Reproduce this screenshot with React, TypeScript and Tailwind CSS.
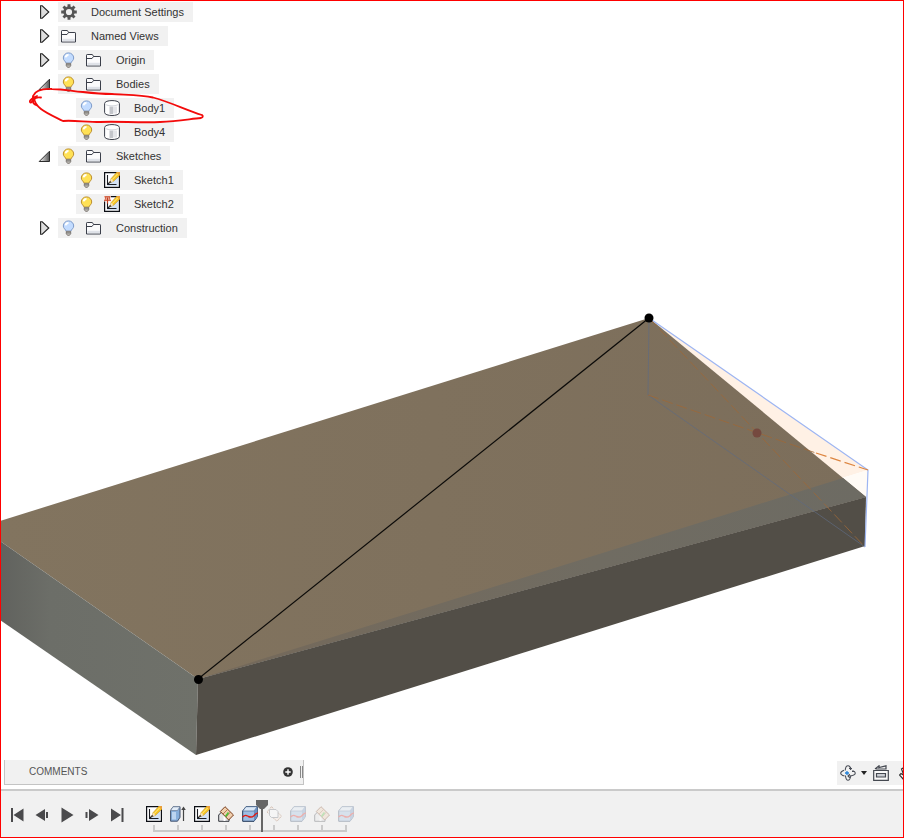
import React, { useState } from "react";

const ink = "#3b3f4a";

function Bulb({ on }: { on?: boolean }) {
  return (
    <svg viewBox="0 0 16 16" className="size-4">
      <path
        d="M7.5.9a5.100 5.100 0 0 0-5.200 5.100c0 2.500 2.400 3.300 2.900 5.300h4.600c.5-2 2.900-2.800 2.900-5.300A5.100 5.100 0 0 0 7.500.9Z"
        fill={on ? "#ffe155" : "#c3dcff"}
        stroke={on ? "#bd902f" : "#7f9cca"}
      />
      <path d="M4.600 5.400A2.800 2.800 0 0 1 7.500 3" fill="none" stroke="#fff" strokeWidth="1.800" />
      <path d="M5.300 11.300h4.400v2.400l-1.200 1.600h-2l-1.200-1.600Z" fill="#c4c1bc" stroke="#77726c" strokeWidth=".9" />
      <path d="M5.500 12.900h4" stroke="#5a5753" strokeWidth=".8" />
    </svg>
  );
}

function Folder() {
  return (
    <svg viewBox="0 0 16 16" className="size-4">
      <path d="M.5 14V3.200q0-.7.7-.7H6q.6 0 .8.6l.7 1.400h6.400q.6 0 .6.6V14Z" fill="#fbfbfc" stroke={ink} />
      <path d="M1 6.500h5l1.500-2" fill="none" stroke={ink} />
      <path d="M1.500 12h12.500" stroke="#dfe2e8" strokeWidth="2.400" />
    </svg>
  );
}

function Gear() {
  return (
    <svg viewBox="-8 -8 16 16" className="size-4" fill="none" stroke="#555">
      <circle r="4.400" strokeWidth="2.600" />
      {[0, 45, 90, 135].map((a) => (
        <path key={a} d="M0-7.800V-5M0 5v2.800" strokeWidth="2.900" transform={`rotate(${a})`} />
      ))}
    </svg>
  );
}

function Cylinder() {
  return (
    <svg viewBox="0 0 16 16" className="size-4">
      <path d="M.6 3.500v9c0 4 14.800 4 14.800 0v-9C15.400-.4.600-.4.6 3.500Z" fill="#fff" stroke={ink} />
      <path d="M5.500 6.500h3.500v7.500H5.500Z" fill="#c3c5ca" />
      <path d="M9 6.500h4v7H9Z" fill="#e4e5e9" />
      <path d="M1.500 4.200c2 2.200 11 2.200 13 0" fill="none" stroke="#d3d6dc" />
    </svg>
  );
}

function SketchIcon({ pinned = false }: { pinned?: boolean }) {
  return (
    <svg viewBox="0 0 16 16" className="size-4">
      <path d="M.6.6h14.800v14.800H.6Z" fill="#fff" stroke="#0b0e14" strokeWidth="1.200" />
      <path d="M4 12 14 5v9H3Z" fill="#d3e2f6" />
      <path d="M3.500 3v9.500H12.500M3.500 12.500l3.500-3.500" fill="none" stroke="#1a1c22" strokeWidth="1.100" />
      <path d="m5.800 10.700 1.200-4L13 0l3 3-6.500 6.300Z" fill="#f8c824" stroke="#b07a14" strokeWidth=".5" />
      <path d="m8 7.800 6-6.300" stroke="#ffe98a" strokeWidth="1" />
      <path d="m5.800 10.700 1.200-4 2.500 2.600Z" fill="#f7e4c6" />
      <path d="m5.600 10.900.6-1.900 1.300 1.300Z" fill="#222" />
      <path d="M12.500.5 13 0h3v3l-.5.500Z" fill="#e9a03a" />
      {pinned && (
        <g>
          <path d="M0 0h7v5.500H0Z" fill="#fbe3dc" />
          <path d="M.5.8h6M1.800 1v2.500M5.200 1v2.500M0 4.300h7M3.500 1.500V7.500" fill="none" stroke="#c6401f" strokeWidth="1.100" />
        </g>
      )}
    </svg>
  );
}

function ExtrudeIcon() {
  return (
    <svg viewBox="0 0 16 16" className="size-4">
      <path d="M.6 4.500 3 .8h7v10.500l-2.500 3.900H.6Z" fill="#87aedb" stroke="#44536e" />
      <path d="M.6 4.500 3 .8h7L7.500 4.500Z" fill="#e3edf8" stroke="#6b7c98" strokeWidth=".7" />
      <path d="M2 6h4v7.500H2Z" fill="#bcd4f0" />
      <path d="M13.500 3v12" stroke="#444" strokeWidth="1.200" />
      <path d="m11.200 4 2.300-3.500L15.800 4Z" fill="#444" />
    </svg>
  );
}

function PlaneIcon() {
  return (
    <svg viewBox="0 0 16 16" className="size-4">
      <path d="M.7 15.300V9L4 5.500l7 5v4.800Z" fill="#e4e4e6" stroke="#33363d" />
      <path d="M6.500 15V9.500" stroke="#fff" strokeWidth="2" />
      <path d="M7 .7 15.500 9l-4.800 5L2.300 5.500Z" fill="#f0cfae" stroke="#7a3f1d" />
      <path d="m5 8 5-5M8 11l4.500-5" stroke="#a86437" strokeWidth=".8" />
      <path d="m7.500 10.500 3-4" stroke="#46c034" strokeWidth="1.500" />
    </svg>
  );
}

function SplitIcon() {
  return (
    <svg viewBox="0 0 16 16" className="size-4">
      <path d="M.7 5 4 .7h11.300v10L12 15.300H.7Z" fill="#9dbde3" stroke="#1f3556" />
      <path d="M.7 5 4 .7h11.300L12 5Z" fill="#dbe8f7" stroke="#4d6a92" strokeWidth=".7" />
      <path d="M12 5v10.300l3.300-4.600V.7Z" fill="#6990c2" />
      <path d="M.5 11c3-3 4-1.500 6-.5s4 .5 5.500-.8 2-3 4-2.500" fill="none" stroke="#e01b12" strokeWidth="1.400" />
    </svg>
  );
}

function SketchPlaneIcon() {
  return (
    <svg viewBox="0 0 16 16" className="size-4">
      <path d="M5.500.7 15.500 10l-4.500 5.300L1 6Z" fill="#fbeadb" stroke="#8b4a23" strokeDasharray="2 1" />
      <path d="M3.500 3.500h6.500l2 2v6H5.500l-2-2Z" fill="#fff" stroke="#6a6d75" />
    </svg>
  );
}

type Row = {
  name: string;
  kind: "gear" | "folder" | "body" | "sketch" | "pinned";
  bulb?: boolean;
  open?: boolean;
};

const rows: Row[] = [
  { name: "Document Settings", kind: "gear", open: false },
  { name: "Named Views", kind: "folder", open: false },
  { name: "Origin", kind: "folder", bulb: false, open: false },
  { name: "Bodies", kind: "folder", bulb: true, open: true },
  { name: "Body1", kind: "body", bulb: false },
  { name: "Body4", kind: "body", bulb: true },
  { name: "Sketches", kind: "folder", bulb: true, open: true },
  { name: "Sketch1", kind: "sketch", bulb: true },
  { name: "Sketch2", kind: "pinned", bulb: true },
  { name: "Construction", kind: "folder", bulb: false, open: false },
];

const rowIcons = {
  gear: <Gear />,
  folder: <Folder />,
  body: <Cylinder />,
  sketch: <SketchIcon />,
  pinned: <SketchIcon pinned />,
};

function TreeRow({ row }: { row: Row }) {
  const [lit, setLit] = useState(row.bulb);
  const leaf = row.open === undefined;
  return (
    <li className={`flex h-6 items-center ${leaf ? "pl-[76px]" : "pl-[38px]"}`}>
      {!leaf && (
        <button aria-label={`Toggle ${row.name}`} aria-expanded={row.open} className="mr-1 size-4">
          <svg viewBox="0 0 16 16" className="size-4">
            {row.open ? (
              <path d="M1.200 13.500h10.300V3.200Z" fill="url(#openFill)" stroke="#2c2c2c" />
            ) : (
              <path d="M2.600 1.800v12.400h1.600L10.800 8 4.200 1.800Z" fill="#dedede" stroke="#222" strokeWidth="1.100" />
            )}
          </svg>
        </button>
      )}
      <div className="flex h-5 items-center bg-[#f1f1f1] pl-[3px] pr-[9px]">
        {lit !== undefined && (
          <button aria-label={`Show or hide ${row.name}`} onClick={() => setLit(!lit)} className="mr-[9px] size-4">
            <Bulb on={lit} />
          </button>
        )}
        {rowIcons[row.kind]}
        <span className="ml-[14px] whitespace-nowrap">{row.name}</span>
      </div>
    </li>
  );
}

function Scene() {
  return (
    <svg
      viewBox="0 0 904 838"
      preserveAspectRatio="xMinYMin slice"
      className="absolute inset-0 h-full w-full"
      aria-label="Model view"
    >
      <defs>
        <linearGradient id="openFill">
          <stop offset="0.2" stopColor="#ddd" />
          <stop offset="1" stopColor="#555" />
        </linearGradient>
        <linearGradient id="topFace" x1="0" y1="0" x2="1" y2="0">
          <stop offset="0" stopColor="#82745f" />
          <stop offset="1" stopColor="#7c6e5b" />
        </linearGradient>
        <linearGradient id="leftFace">
          <stop offset="0" stopColor="#61625e" />
          <stop offset="0.250" stopColor="#6c6e68" />
          <stop offset="1" stopColor="#6f716a" />
        </linearGradient>
        <linearGradient id="bandFace">
          <stop offset="0" stopColor="#75695a" />
          <stop offset="0.600" stopColor="#706c62" />
          <stop offset="1" stopColor="#6d6b63" />
        </linearGradient>
      </defs>
      <path d="M649 318 868 470 842 478Z" fill="#fff1e5" />
      <path d="M868 470 842 478 866 497Z" fill="#fffbf6" />
      <path d="M0 521 649 318 866 497 198 679 0 541Z" fill="url(#topFace)" />
      <path d="M198 679 843 478 866 497Z" fill="url(#bandFace)" />
      <path d="M0 541 198 679 196 755 0 620Z" fill="url(#leftFace)" />
      <path d="M198 679 866 497 865 546 196 755Z" fill="#524e47" />
      <path d="M649 318 648 395 865 547" fill="none" stroke="#5f6b80" strokeOpacity=".7" />
      <path d="M649 318 868 470 865 547" fill="none" stroke="#9db5f2" strokeWidth="1.200" />
      <path d="M649 318 865 547M648 395 816 453" fill="none" stroke="#9c6838" strokeOpacity=".8" strokeDasharray="11 4" />
      <path d="M816 453 868 470" stroke="#dd8540" strokeWidth="1.200" strokeDasharray="11 4" />
      <circle cx="757" cy="433" r="4.500" fill="#75493f" />
      <path d="M198 679 649 318" stroke="#0c0b09" strokeWidth="1.200" />
      <circle cx="198.500" cy="679.500" r="4.500" />
      <circle cx="649" cy="318" r="4.500" />
    </svg>
  );
}

function Markup() {
  return (
    <svg
      viewBox="0 0 904 838"
      preserveAspectRatio="xMinYMin slice"
      className="pointer-events-none absolute inset-0 h-full w-full"
    >
      <path
        d="M41 97.500C38 97 35 98 34 99.500C32 102 33 104 37 105.500M37 96C34 97 29 100 30 102C31 104 33 101 33 96C35 91 42 88.500 52 89C66 89 72 91.500 83 92C96 93.500 103 94 112 94C128 95 142 95 153 97.500C170 102 186 110 202 115Q204 117 201 118C190 119 178 121 160 122C140 123 115 121 100 122C86 122 72 120 63 121C55 117 46 113 41 109C36 105 34 102 34 97"
        fill="none"
        stroke="#f30b0b"
        strokeWidth="1.800"
        strokeLinecap="round"
        strokeLinejoin="round"
      />
    </svg>
  );
}

const transport = [
  { label: "Go to start", d: "M4 3h2v14H4ZM16.500 3.500v13L6.500 10Z" },
  { label: "Step back", d: "M3.500 10 13 4v12ZM14 7h2v6h-2Z" },
  { label: "Play", d: "M4.500 2.500v15L16.500 10Z" },
  { label: "Step forward", d: "M3.500 7h2v6h-2ZM7 4v12l9.500-6Z" },
  { label: "Go to end", d: "M4 3.500v13L14 10ZM14.500 3h2v14h-2Z" },
];

const features = [
  { label: "Sketch1", icon: <SketchIcon /> },
  { label: "Extrude", icon: <ExtrudeIcon /> },
  { label: "Sketch2", icon: <SketchIcon /> },
  { label: "Plane", icon: <PlaneIcon /> },
  { label: "Split", icon: <SplitIcon /> },
  { label: "Sketch plane", icon: <SketchPlaneIcon />, later: true },
  { label: "Split 2", icon: <SplitIcon />, later: true },
  { label: "Plane 2", icon: <PlaneIcon />, later: true },
  { label: "Split 3", icon: <SplitIcon />, later: true },
];

function Timeline() {
  return (
    <footer className="relative flex h-[49px] items-start border-t-2 border-[#cacaca] bg-[#f1f1f1] pl-1">
      <div className="flex pt-[14px]">
        {transport.map((t) => (
          <button key={t.label} aria-label={t.label} className="flex w-[25px] justify-center">
            <svg viewBox="0 0 20 20" className="size-5" fill="#4a4a4c">
              <path d={t.d} />
            </svg>
          </button>
        ))}
      </div>
      <div className="relative ml-[13px] flex pt-[15px]">
        {features.map((f) => (
          <button key={f.label} aria-label={f.label} className="flex w-6 flex-col items-center gap-[3px]">
            <span className={f.later ? "opacity-30" : ""}>{f.icon}</span>
            <span className="h-[5px] w-[2px] bg-[#cacaca]" />
          </button>
        ))}
        <div className="absolute left-[11px] right-[11px] top-[39px] h-[2px] bg-[#cacaca]" />
        <svg viewBox="0 0 12 32" className="absolute left-[114px] top-[9px] h-8 w-3" fill="#666">
          <path d="M0 0h12v5L8 9H7v23H5V9H4L0 5Z" />
        </svg>
      </div>
    </footer>
  );
}

export default function App() {
  return (
    <div className="relative flex min-h-screen flex-col overflow-hidden bg-white font-['Liberation_Sans',Arial,sans-serif] text-[11px] leading-4 text-[#333]">
      <Scene />
      <main className="relative flex flex-1 flex-col justify-between">
        <ul>
          {rows.map((row) => (
            <TreeRow key={row.name} row={row} />
          ))}
        </ul>
        <div className="mb-1 flex items-end justify-between">
          <section className="ml-1 flex h-[25px] w-[300px] items-center border-x border-b border-[#c4c4c4] bg-[#f1f1f1] pl-6">
            <h2 className="flex-1 text-[10px] text-[#555]">COMMENTS</h2>
            <button aria-label="Add comment">
              <svg viewBox="0 0 10 10" className="size-[10px]">
                <circle cx="5" cy="5" r="4.800" fill="#333" />
                <path d="M5 2.300v5.400M2.300 5h5.400" stroke="#fff" strokeWidth="1.400" />
              </svg>
            </button>
            <div className="ml-[7px] h-3 w-[3px] border-x border-[#888]" />
          </section>
          <nav className="flex h-6 w-[67px] items-center overflow-hidden bg-[#f1f1f1] pl-[3px]">
            <button aria-label="Orbit" className="shrink-0">
              <svg viewBox="0 0 16 16" className="size-4" fill="none" stroke="#4a4e57" strokeWidth="1.100">
                <path d="M5.200 5.500C5.400 2.500 6.400.7 8 .7s2.500 1.600 2.800 4M5.400 10.500c.4 3 1.300 4.800 2.600 4.800s2.300-1.700 2.700-4.300" />
                <path d="M4 5.200C1.800 6 .7 7 .7 8.100c0 1.500 1.500 2.400 3.800 2.900M12.500 5.500c1.800.7 2.800 1.500 2.800 2.600 0 1.600-3 2.900-7 2.900" />
                <path d="M9.800 9.200 8 11l1.800 1.800M9 3.500h3M10.500 2v3M12 6.500h2.500" />
                <path d="M7 6v4M5 8h4" stroke="#2180d8" strokeWidth="1.300" />
              </svg>
            </button>
            <button aria-label="Orbit options" className="ml-[5px] shrink-0">
              <svg viewBox="0 0 6 4" className="h-1 w-[6px]" fill="#222">
                <path d="M0 0h6L3 4Z" />
              </svg>
            </button>
            <button aria-label="Look at" className="ml-[6px] shrink-0">
              <svg viewBox="0 0 16 16" className="size-4" fill="none" stroke="#444850" strokeWidth="1.200">
                <path d="M.7 5.500h14.600v9.800H.7Z" fill="#fafafa" />
                <path d="M3.500 8.500h9v3.500h-9Z" fill="#c9ccd2" />
                <path d="M2 4 6 .8v1.700L13 .8V4H3" />
              </svg>
            </button>
            <button aria-label="Pan" className="ml-[10px] shrink-0">
              <svg viewBox="0 0 16 16" className="size-4" fill="#fff" stroke="#333" strokeWidth="1.200">
                <path d="m5 15-4.500-5 1.500-1.500 3 2L2.500 4 4 3l3 4.500L6.500 1.500h2L9.500 7l2-5 1.500.5L12.500 15Z" />
              </svg>
            </button>
          </nav>
        </div>
      </main>
      <Timeline />
      <Markup />
      <div className="pointer-events-none absolute inset-0 border border-[#f00]" />
    </div>
  );
}
